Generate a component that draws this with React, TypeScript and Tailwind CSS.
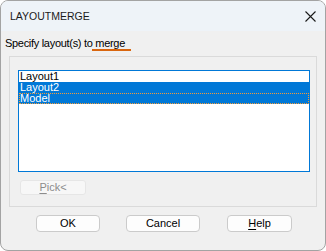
const font = { fontFamily: '"Liberation Sans", Arial, sans-serif' }

const layouts = [
  { name: 'Layout1', selected: false, focused: false },
  { name: 'Layout2', selected: true, focused: false },
  { name: 'Model', selected: true, focused: true },
]

function CloseIcon() {
  return (
    <svg width="11" height="11" viewBox="0 0 11 11" className="text-[#1a1a1a]">
      <path d="M0.5 0.5 L10.5 10.5 M10.5 0.5 L0.5 10.5" stroke="currentColor" strokeWidth="1.1" fill="none" />
    </svg>
  )
}

function DialogButton({ children, width }: { children: React.ReactNode; width: string }) {
  return (
    <button
      className={`${width} h-[17px] flex items-center justify-center rounded-[4px] border border-[#cbcbcb] bg-[#fdfdfd] text-[11px] leading-none text-black`}
    >
      {children}
    </button>
  )
}

export default function App() {
  return (
    <div
      style={font}
      className="flex h-[251px] w-[326px] flex-col overflow-hidden rounded-[8px] border border-[#a3a3a3] bg-[#f0f0f0]"
    >
      {/* title bar */}
      <div className="flex h-[30px] shrink-0 items-center justify-between bg-[#eef3f8] pl-[9px] pr-[9px]">
        <span className="text-[10.5px] leading-none text-[#1a1a1a]">LAYOUTMERGE</span>
        <CloseIcon />
      </div>

      <div className="pl-[4px] pt-[6px]">
        <p className="text-[11px] leading-[12px] tracking-[-0.3px] text-black">
          Specify layout(s) to{' '}
          <span className="relative">
            merge
            <span className="absolute -left-[3px] -right-[6px] top-[12px] h-[2px] bg-[#d9660f]" />
          </span>
        </p>
      </div>

      {/* group box */}
      <div className="mx-[8px] mt-[7px] flex h-[151px] flex-col border border-[#dadada] pt-[13px]">
        <div className="ml-[8px] h-[102px] w-[292px] border border-[#0078d7] bg-white">
          {layouts.map((l) => (
            <div
              key={l.name}
              className={`h-[11px] pl-[1px] text-[11px] leading-[11px] ${
                l.selected ? 'bg-[#0078d7] text-white' : 'text-black'
              } ${l.focused ? 'outline outline-1 -outline-offset-1 outline-dotted outline-[#f29b38]' : ''}`}
            >
              {l.name}
            </div>
          ))}
        </div>
        <button className="ml-[10px] mt-[8px] flex h-[15px] w-[66px] items-center justify-center rounded-[3px] border border-[#e6e6e6] bg-[#f7f7f7] text-[11px] leading-none text-[#8c8c8c]">
          <span className="underline underline-offset-2">P</span>ick&lt;
        </button>
      </div>

      {/* buttons */}
      <div className="flex pl-[35px] pt-[8px]">
        <DialogButton width="w-[64px]">OK</DialogButton>
        <div className="w-[26px]" />
        <DialogButton width="w-[74px]">Cancel</DialogButton>
        <div className="w-[27px]" />
        <DialogButton width="w-[65px]">
          <span className="underline underline-offset-2">H</span>elp
        </DialogButton>
      </div>
    </div>
  )
}
